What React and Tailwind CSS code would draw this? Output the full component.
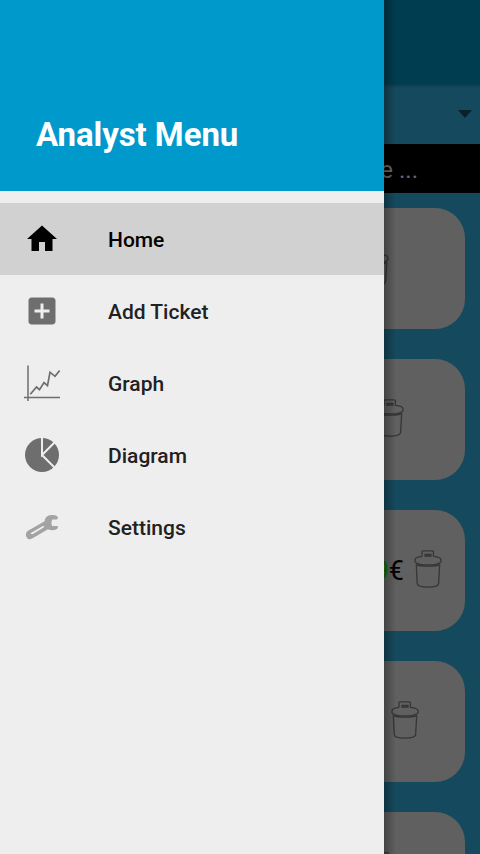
import React from "react";

function Trash() {
  return (
    <svg width="28" height="38" viewBox="0 0 28 38" fill="none" stroke="#363636" strokeWidth="1.3" strokeLinejoin="round" className="shrink-0">
      <path d="M8 6.3V1.8Q8 .9 9 .9H18.4Q19.4.9 19.4 1.8V6.3C24.3 6.6 27.1 8 27.1 10.4V11.4C26 14 21 14.9 14 14.9S2 14 .9 11.4V10.4C.9 8 3.6 6.6 8 6.3Z" />
      <path d="M11 4.3H17V6.2H11Z" fill="#404040" />
      <path d="M2.3 14.2L3.2 33.6C3.4 36 6 37.1 14 37.1S24.3 36 24.6 33.6L25.7 14.2" />
      <path d="M2.5 14.6C6 16.6 22 16.6 25.5 14.6" />
    </svg>
  );
}

function Ticket({ pad, price }) {
  return (
    <div className={"flex h-[121px] w-full shrink-0 items-center justify-end rounded-[30px] bg-[#606060] pb-[3px] " + pad}>
      {price && (
        <div className="mt-[3px] mr-[10px] text-[27px] leading-8 text-black">
          <span className="text-[#007800]">9</span>€
        </div>
      )}
      <Trash />
    </div>
  );
}

function HomeIcon() {
  return (
    <svg width="36" height="36" viewBox="0 0 24 24" fill="#000">
      <path d="M10 20v-6h4v6h5v-8h3L12 3 2 12h3v8z" />
    </svg>
  );
}

function AddIcon() {
  return (
    <svg width="36" height="36" viewBox="0 0 24 24" fill="#6e6e6e">
      <path d="M19 3H5c-1.11 0-2 .9-2 2v14c0 1.1.89 2 2 2h14c1.1 0 2-.9 2-2V5c0-1.1-.9-2-2-2zm-2 10h-4v4h-2v-4H7v-2h4V7h2v4h4v2z" />
    </svg>
  );
}

function GraphIcon() {
  return (
    <svg width="36" height="36" viewBox="0 0 36 36" fill="none" stroke="#6e6e6e">
      <path d="M4 .5V36M0 32.5H36" strokeWidth="1.5" />
      <path d="M6.3 29.3L12.5 22L15.5 24.7L20 17.5L23.5 20.7L26 7.2L31 11.3L35.7 5.5" strokeWidth="1.7" />
    </svg>
  );
}

function DiagramIcon() {
  return (
    <svg width="36" height="36" viewBox="0 0 36 36">
      <circle cx="18" cy="18" r="17" fill="#6e6e6e" />
      <path d="M18 0V18L31 5M18 18L31 31" fill="none" stroke="#eee" strokeWidth="2" />
    </svg>
  );
}

function SettingsIcon() {
  return (
    <svg width="36" height="36" viewBox="0 0 36 36">
      <path fillRule="evenodd" fill="#a3a3a3" d="M34 8.6C33.5 6.4 30.2 5.8 27.5 6C23.6 6.3 20.8 8.4 20.6 12.2L4 21.8C1.6 23.4 1.4 26 2.6 28.2C3.9 30.4 6 30.7 8.1 29.5L24 20.2C27.4 22.3 33.6 21.4 34 18C34 17.2 33.2 16.8 32.2 17L28.2 17.1C27.2 15.4 27.1 12.8 28.3 10.6L32.6 10.4Q34 10 34 8.6ZM19.3 16.8Q20.8 17.4 19.7 18.6L9 25Q6.6 25.9 6.8 24Z" />
    </svg>
  );
}

const items = [
  { label: "Home", Icon: HomeIcon, style: "bg-[#d1d1d1] text-black" },
  { label: "Add Ticket", Icon: AddIcon, style: "text-[#212121]" },
  { label: "Graph", Icon: GraphIcon, style: "text-[#212121]" },
  { label: "Diagram", Icon: DiagramIcon, style: "text-[#212121]" },
  { label: "Settings", Icon: SettingsIcon, style: "text-[#212121]" },
];

export default function App() {
  return (
    <div className="relative h-[854px] w-[480px] overflow-hidden bg-[#154a5e] font-[Roboto,sans-serif]">
      <main className="flex h-full flex-col">
        <div className="h-[84px] shrink-0 bg-[#003d51]" />
        <div className="h-1 shrink-0 bg-linear-to-b from-[#063c4f] to-[#154a5e]" />
        <div className="flex h-14 shrink-0 items-center justify-end pr-2">
          <svg width="14" height="8" viewBox="0 0 14 8" className="relative top-[-2px]">
            <path d="M0 0H14L7 8Z" fill="#08212a" />
          </svg>
        </div>
        <div className="flex h-[49px] shrink-0 items-center justify-end bg-black pr-[62px] text-2xl text-[#696969]">
          <span className="relative top-px">e ...</span>
        </div>
        <div className="flex flex-col gap-[30px] px-[15px] pt-[15px]">
          <Ticket pad="pr-[76px]" />
          <Ticket pad="pr-[61px]" />
          <Ticket pad="pr-[23px]" price />
          <Ticket pad="pr-[46px]" />
          <Ticket pad="pr-[68px]" />
        </div>
      </main>

      <aside className="absolute inset-y-0 left-0 flex w-96 flex-col bg-[#eee]">
        <header className="flex h-[191px] shrink-0 items-end bg-[#0099cc] px-9 pb-9">
          <h1 className="text-[33px] leading-10 font-bold tracking-[-0.08px] text-white">Analyst Menu</h1>
        </header>
        <nav className="pt-3">
          {items.map(({ label, Icon, style }) => (
            <div key={label} className={"flex h-[72px] items-center gap-12 pl-6 text-[21px] font-medium " + style}>
              <Icon />
              <span className="relative top-[2px]">{label}</span>
            </div>
          ))}
        </nav>
      </aside>
      <div className="absolute inset-y-0 left-96 w-3 bg-linear-to-r from-black/30 to-transparent" />
    </div>
  );
}
